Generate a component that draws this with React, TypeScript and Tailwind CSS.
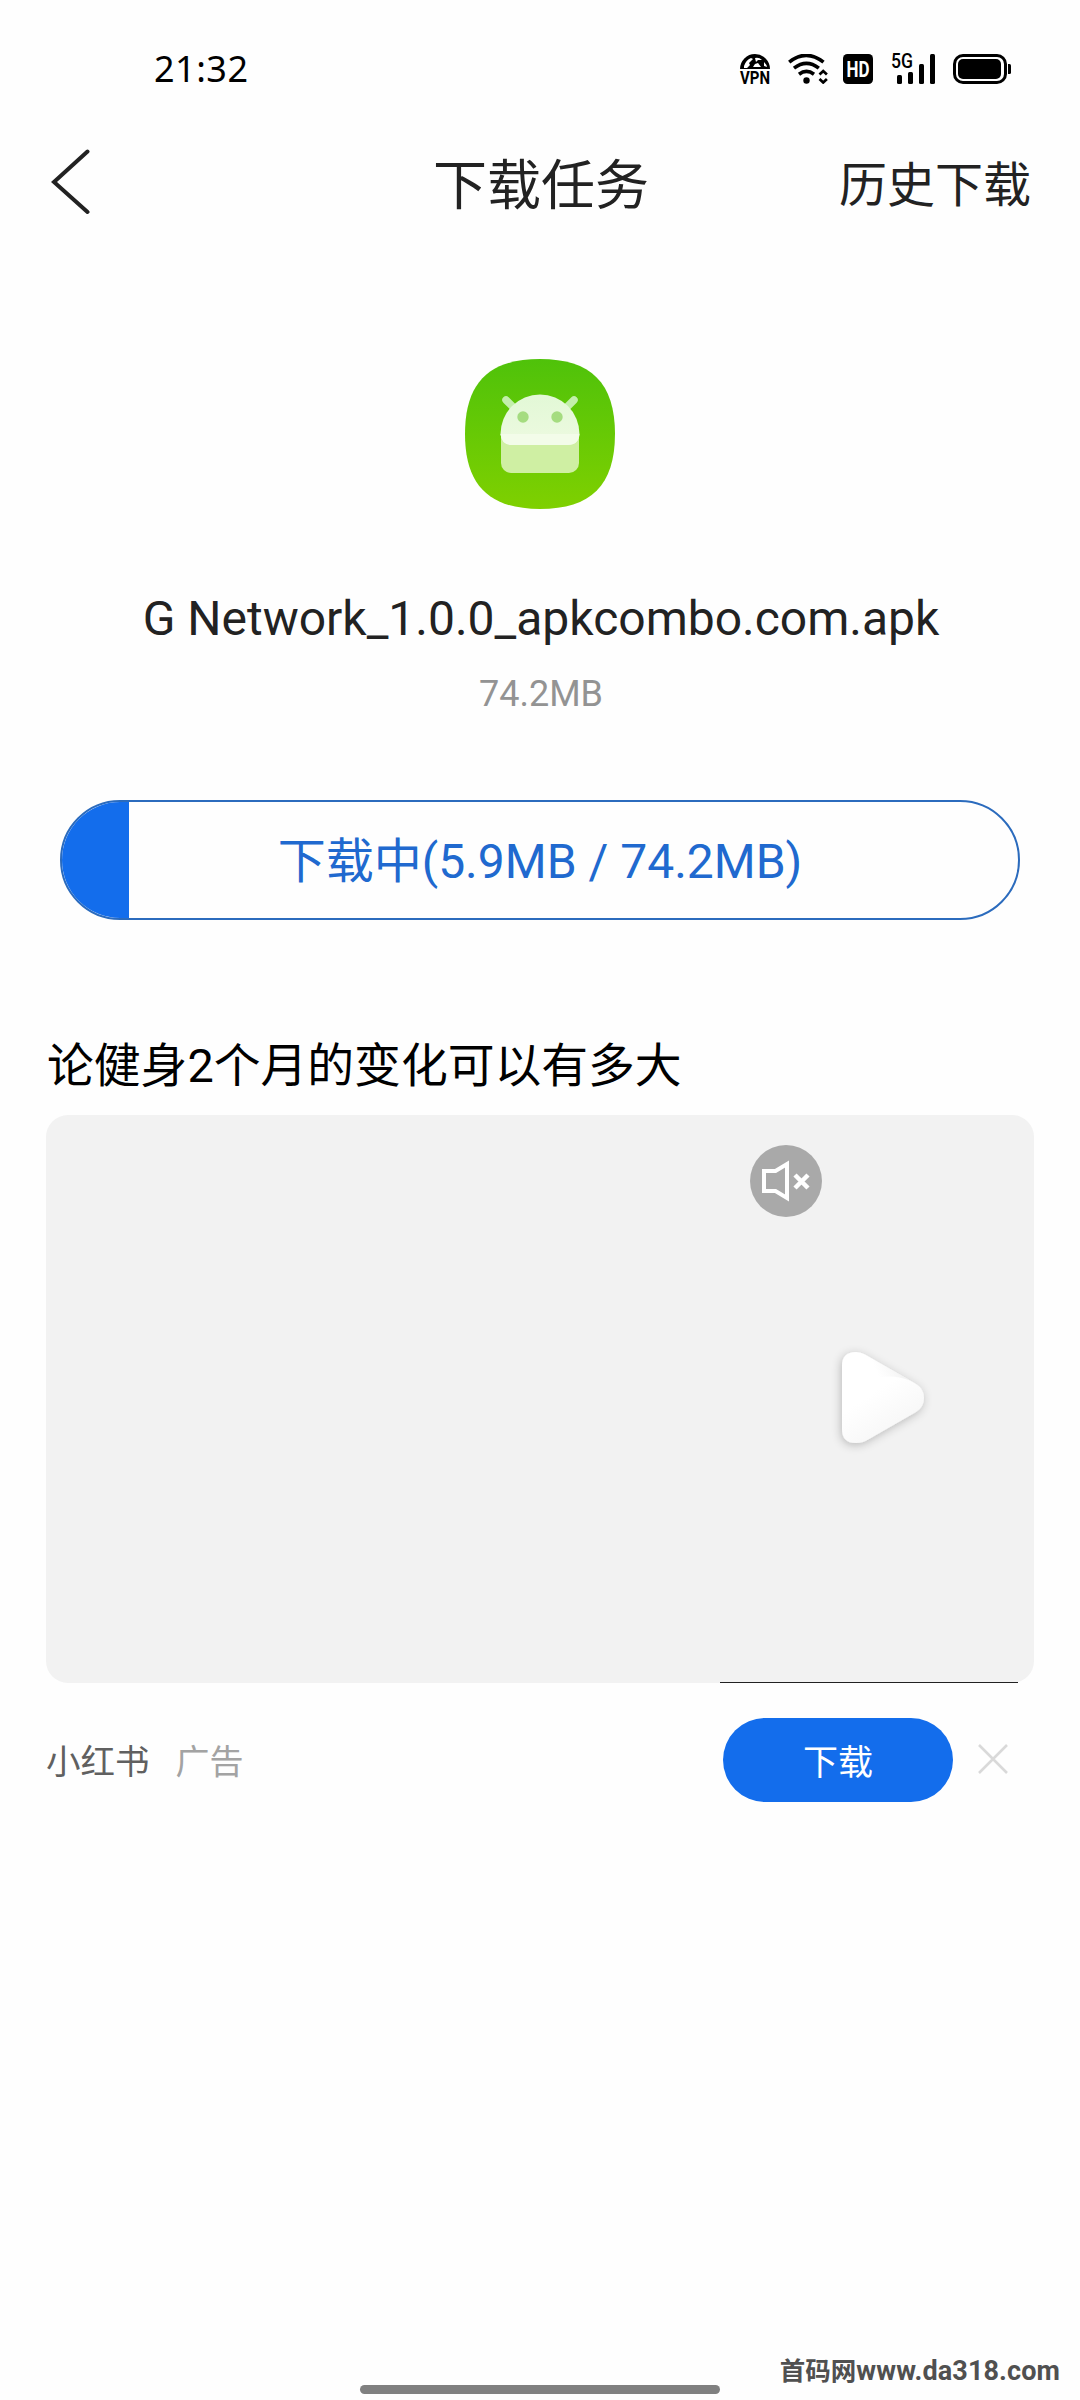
import React from 'react';

const download = {
    fileName: 'G Network_1.0.0_apkcombo.com.apk',
    loaded: 5.9,
    total: 74.2,
};

const VpnIcon = () => (
    <svg className="w-[30px] h-[30px] overflow-visible" viewBox="0 0 30 30">
        <path d="M0 15a15 15 0 0 1 30 0z" fill="#000" />
        <path d="M4 12q2-6 7-8l2 1-4 4 1 2-3 3H4zM15 4q4-1 7 2l-4 0-2 2zM13 13l2-3 3-1 3 4zM24 8q3 3 3 5l-3-1z" fill="#fff" />
        <text x="15" y="29.8" textAnchor="middle" textLength="30" lengthAdjust="spacingAndGlyphs" fontSize="17.5" fontWeight="700" fontFamily="Roboto, sans-serif">VPN</text>
    </svg>
);

const WifiIcon = () => (
    <svg className="w-[40px] h-[30px]" viewBox="0 0 40 30" fill="none" stroke="#000">
        <path d="M1.2 8.2Q18-5.5 35.5 8.2" strokeWidth="3.6" />
        <path d="M6 14.2Q18.5 4.5 30.8 14.2" strokeWidth="3.6" />
        <path d="M11 20.2Q18.5 14.5 26 20.2" strokeWidth="3.6" />
        <circle cx="18.500" cy="26.500" r="3.200" fill="#000" stroke="none" />
        <path d="M31.500 20.500l3.700-3.500 3.700 3.500M31.500 25l3.700 3.500 3.700-3.500" strokeWidth="2.700" />
    </svg>
);

const HdIcon = () => (
    <svg className="w-[30px] h-[30px] overflow-visible" viewBox="0 0 30 30">
        <rect width="30" height="30" rx="4.5" />
        <text x="15" y="22.7" textAnchor="middle" textLength="23" lengthAdjust="spacingAndGlyphs" fontSize="21.5" fontWeight="700" fill="#fff" fontFamily="Roboto, sans-serif">HD</text>
    </svg>
);

const SignalIcon = () => (
    <svg className="w-[44px] h-[30px] overflow-visible" viewBox="0 0 44 30">
        <text x="0" y="14.3" textLength="22" lengthAdjust="spacingAndGlyphs" fontSize="19.5" fontWeight="500" fontFamily="Roboto, sans-serif">5G</text>
        <rect x="6" y="21" width="5" height="9" rx="1.5" />
        <rect x="17" y="18" width="5" height="12" rx="1.5" />
        <rect x="28" y="10" width="5" height="20" rx="1.5" />
        <rect x="39" y="0" width="5" height="30" rx="1.5" />
    </svg>
);

const BatteryIcon = () => (
    <svg className="w-[58px] h-[30px]" viewBox="0 0 58 30">
        <rect x="1.5" y="1.5" width="51" height="27" rx="8.5" fill="none" stroke="#000" strokeWidth="3" />
        <rect x="5" y="5" width="43" height="20" rx="5" />
        <path d="M55 10h1.5a1.5 1.5 0 0 1 1.5 1.5v7a1.5 1.5 0 0 1-1.5 1.5H55z" />
    </svg>
);

const AppIcon = () => (
    <svg className="w-[150px] h-[150px]" viewBox="0 0 150 150">
        <defs>
            <linearGradient id="appBg" x1="0" y1="0" x2="0" y2="1">
                <stop offset="0" stopColor="#4fc20a" />
                <stop offset="1" stopColor="#7fd000" />
            </linearGradient>
            <linearGradient id="head" x1="0" y1="0" x2="0" y2="1">
                <stop offset="0" stopColor="#e2f8d6" />
                <stop offset="1" stopColor="#edfae0" />
            </linearGradient>
        </defs>
        <path d="M75 0C126 0 150 24 150 75S126 150 75 150 0 126 0 75 24 0 75 0z" fill="url(#appBg)" />
        <path d="M41 41l8 8M109 41l-8 8" stroke="#c3efac" strokeWidth="7.5" strokeLinecap="round" />
        <path d="M36 76h78v28a10 10 0 0 1-10 10H46a10 10 0 0 1-10-10z" fill="#cfefa3" />
        <path d="M35.5 75a39.5 39.5 0 0 1 79 0q-1 11-12 11h-55q-11 0-12-11z" fill="url(#head)" />
        <path d="M35.5 75h79q-1 11-12 11h-55q-11 0-12-11z" fill="#f3fce9" />
        <circle cx="58" cy="58" r="5.7" fill="#a5dc80" />
        <circle cx="92" cy="58" r="5.7" fill="#a5dc80" />
    </svg>
);

const PlayIcon = () => (
    <svg className="w-[122px] h-[132px]" viewBox="0 0 122 132">
        <defs>
            <linearGradient id="play" x1="0" y1="0" x2="0.6" y2="1">
                <stop offset="0" stopColor="#fff" />
                <stop offset="0.5" stopColor="#fff" />
                <stop offset="1" stopColor="#f6f6f6" />
            </linearGradient>
            <linearGradient id="shine" x1="0" y1="0.5" x2="1" y2="0.2">
                <stop offset="0.2" stopColor="#f2f2f2" stopOpacity="0" />
                <stop offset="1" stopColor="#e9e9e9" />
            </linearGradient>
            <filter id="playShadow" x="-30%" y="-30%" width="160%" height="160%">
                <feDropShadow dx="-1" dy="2" stdDeviation="5" floodColor="#000" floodOpacity="0.24" />
            </filter>
        </defs>
        <path d="M20 34Q20 20 34 20q5 0 9 2.500L94 52q8 5 8 14t-8 14L47 107q-6 4-13 4-14 0-14-14z" fill="url(#play)" filter="url(#playShadow)" />
        <path d="M43 22.5L88 48.5Q64 40 47 50z" fill="url(#shine)" />
    </svg>
);

const MuteIcon = () => (
    <svg className="w-[72px] h-[72px]" viewBox="0 0 72 72" fill="none" stroke="#fff">
        <circle cx="36" cy="36" r="36" fill="#a9a9a9" stroke="none" />
        <path d="M14 26h11.500L37 19v34l-11.500-7H14z" strokeWidth="4" />
        <path d="M45 30l13 13M58 30L45 43" strokeWidth="4.5" />
    </svg>
);

export default function App() {
    const percent = (download.loaded / download.total) * 100;

    return (
        <div className="w-[1080px] h-[2400px] bg-[#fefefe] flex flex-col overflow-hidden font-['Roboto','Noto_Sans_CJK_SC',sans-serif] text-[#222]">
            {/* Status bar */}
            <div className="h-[138px] shrink-0 flex items-center justify-between pl-[154px] pr-[69px]">
                <span className="font-['Noto_Sans',sans-serif] text-[36px] leading-[40px] tracking-[0.5px] text-black">21:32</span>
                <div className="flex items-center">
                    <VpnIcon />
                    <div className="ml-[18px] flex"><WifiIcon /></div>
                    <div className="ml-[15px] flex"><HdIcon /></div>
                    <div className="ml-[18px] flex"><SignalIcon /></div>
                    <div className="ml-[18px] flex"><BatteryIcon /></div>
                </div>
            </div>

            {/* Header */}
            <header className="h-[92px] shrink-0 grid grid-cols-[1fr_auto_1fr] items-center pl-[51px] pr-[49px]">
                <svg className="mb-1 w-[40px] h-[66px]" viewBox="0 0 40 66" fill="none" stroke="#222" strokeWidth="4" strokeLinecap="round">
                    <path d="M36.500 2.500L3 33l33.500 30" />
                </svg>
                <h1 className="pt-[5px] text-[54px] leading-[87px]">下载任务</h1>
                <span className="pt-[3px] text-[48px] leading-[89px] justify-self-end">历史下载</span>
            </header>

            {/* File info */}
            <section className="flex flex-col items-center pt-[129px]">
                <AppIcon />
                <p className="mt-[80px] pl-[2px] text-[48px] leading-[60px] whitespace-nowrap">{download.fileName}</p>
                <p className="mt-[22px] pl-[2px] text-[36px] leading-[46px] text-[#939393]">{download.total}MB</p>
            </section>

            {/* Progress */}
            <div className="relative mx-[60px] mt-[83px] h-[120px] shrink-0 rounded-full border-2 border-[#2b6bbd] overflow-hidden flex items-center justify-center">
                <div className="absolute -left-[2px] -top-[2px] h-[120px] bg-[#136dec]" style={{ width: `${percent * 0.91}%` }}></div>
                <span className="pt-[4px] text-[48px] leading-[60px] text-[#2069cf] whitespace-nowrap">
                    下载中({download.loaded}MB / {download.total}MB)
                </span>
            </div>

            {/* Ad */}
            <section className="mx-[46px] mt-[111px]">
                <h2 className="pl-px text-[46.8px] leading-[70px] text-black whitespace-nowrap">论健身2个月的变化可以有多大</h2>
                <div className="relative mt-[14px] h-[568px] rounded-[22px] bg-[#f2f2f2]">
                    <div className="absolute left-[704px] top-[30px]"><MuteIcon /></div>
                    <div className="absolute left-[776px] top-[217px]"><PlayIcon /></div>
                    <div className="absolute left-[674px] bottom-0 w-[298px] h-px bg-[#222]"></div>
                </div>
                <div className="mt-[35px] h-[84px] flex items-center">
                    <span className="pt-[4px] text-[34.500px] leading-[50px] text-[#606060]">小红书</span>
                    <span className="pt-[4px] ml-[26px] text-[34px] leading-[50px] text-[#a3a3a3]">广告</span>
                    <button type="button" className="ml-auto w-[230px] h-[84px] pt-[7px] rounded-full bg-[#136dec] text-white text-[35px] leading-[50px]">
                        下载
                    </button>
                    <svg className="ml-[25px] mr-[26px] mb-[3px] w-[30px] h-[30px]" viewBox="0 0 30 30" fill="none" stroke="#d9d9d9" strokeWidth="2.5">
                        <path d="M1 1l28 28M29 1L1 29" />
                    </svg>
                </div>
            </section>

            {/* Footer */}
            <footer className="mt-auto h-[50px] grid grid-cols-[360px_360px_1fr]">
                <div className="col-start-2 self-end mb-[6px] h-[9px] rounded-full bg-[#808080]"></div>
                <div className="pr-[20px] flex justify-end items-center h-[43px] font-bold text-[#505050] whitespace-nowrap">
                    <span className="text-[25.5px]">首码网</span>
                    <span className="text-[27px] tracking-[0.1px]">www.da318.com</span>
                </div>
            </footer>
        </div>
    );
}
